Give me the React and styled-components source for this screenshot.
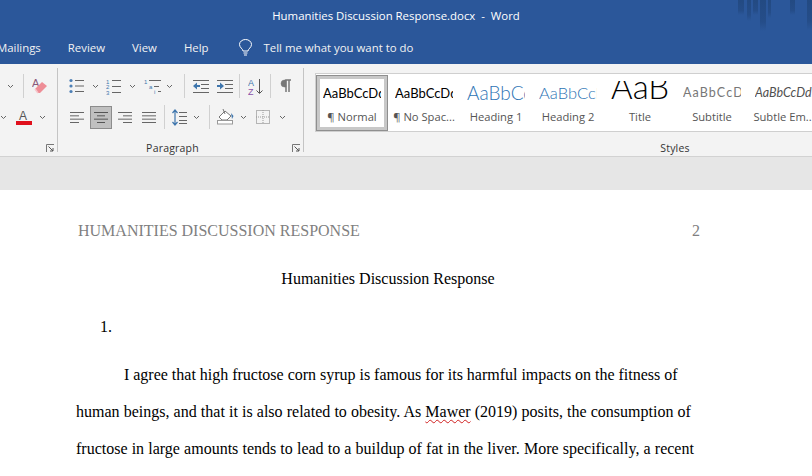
import React from "react";
import styled, { createGlobalStyle } from "styled-components";

const Global = createGlobalStyle`
  html, body { margin: 0; padding: 0; height: 100%; overflow: hidden; background: #e6e6e6; }
  #root { width: 812px; height: 476px; overflow: hidden; }
`;

const Window = styled.div`
  width: 812px; height: 476px; display: flex; flex-direction: column; overflow: hidden;
  font-family: "Open Sans", "Noto Sans", sans-serif;
`;
const TitleBar = styled.header`
  position: relative; height: 32px; flex: none; background: #2b579a; color: #fff; box-sizing: border-box;
  display: flex; align-items: center; justify-content: center; padding: 0 20px 2px 0;
  font-size: 11.4px; white-space: pre;
`;
const Watermark = styled.svg`
  position: absolute; right: 0; top: 0;
`;
const TabBar = styled.nav`
  height: 32px; flex: none; background: #2b579a; color: #f2f2f2;
  display: flex; align-items: center; gap: 27px; padding-bottom: 1px; box-sizing: border-box;
  font-size: 11.4px; white-space: nowrap;
`;
const Tab = styled.span`
  &:first-child { margin-left: -3px; }
`;
const TellMe = styled.span`
  display: flex; align-items: center; gap: 12px; margin-left: 3px;
`;
const Ribbon = styled.section`
  height: 93px; flex: none; box-sizing: border-box; background: #f3f3f3;
  border-bottom: 1px solid #d2d2d2; padding: 4px 0; display: flex; overflow: hidden;
`;
const Group = styled.div`
  flex: none; width: ${p => p.$w}px; box-sizing: border-box; padding-top: 3px;
  border-right: ${p => (p.$last ? "none" : "1px solid #c4c4c4")};
  display: flex; flex-direction: column;
`;
const Row = styled.div`
  height: 30px; margin-bottom: 1px; display: flex; align-items: center; flex: none;
`;
const Cell = styled.span`
  flex: none; width: ${p => p.$w}px; height: ${p => p.$h || 24}px; display: flex;
  align-items: center; justify-content: center;
`;
const ActiveCell = styled(Cell)`
  background: #c0c0c0; border: 1px solid #8c8c8c; box-sizing: border-box;
`;
const Divider = styled.span`
  flex: none; width: 1px; height: 24px; background: #d0d0d0;
`;
const Footer = styled.div`
  margin-top: auto; height: 8px; display: flex; align-items: center; font-size: 10.5px; color: #333;
  letter-spacing: .2px;
`;
const GroupLabel = styled.span`
  flex: 1; text-align: center;
`;
const Launcher = styled.svg`
  flex: none; width: 8px; height: 8px; margin: 0 3px 0 5px;
`;
const Gallery = styled.div`
  margin: 2px 0 0 11px; width: 520px; height: 59px; box-sizing: border-box; background: #fff;
  border: 1px solid #cfcfcf; border-right: none; display: flex; padding: 1px 0 0;
`;
const StyleItem = styled.div`
  flex: none; width: 72px; height: 56px; box-sizing: border-box;
  border: 1px solid ${p => (p.$sel ? "#8f8f8f" : "transparent")};
  box-shadow: ${p => (p.$sel ? "inset 0 0 0 3px #c8c8c8" : "none")};
  display: flex; flex-direction: column; align-items: center; overflow: hidden;
`;
const Preview = styled.div`
  width: 58px; height: 31px; box-sizing: border-box; margin-top: 1px; overflow: hidden; white-space: nowrap; display: flex;
  align-items: center; font-family: Lato, "Noto Sans", sans-serif; flex: none;
  font-size: ${p => p.$size}px; color: ${p => p.$color || "#000"};
  font-weight: ${p => p.$weight || 400}; font-style: ${p => p.$italic ? "italic" : "normal"};
  letter-spacing: ${p => p.$track || 0}px;
  padding-bottom: ${p => p.$lift || 0}px;
  clip-path: inset(${p => p.$cut || 0}px 0 0 0);
`;
const ItemLabel = styled.div`
  margin-top: 1px; font-size: 11.2px; line-height: 16px; color: #555; white-space: nowrap;
`;
const Canvas = styled.main`
  flex: 1; min-height: 0; background: #e6e6e6; padding-top: 33px; overflow: hidden;
`;
const Page = styled.article`
  background: #fff; height: 400px; box-sizing: border-box; padding: 31px 112px 0 76px;
  font-family: "Liberation Serif", "Times New Roman", serif; font-size: 16px; color: #000;
`;
const DocHeader = styled.div`
  display: flex; justify-content: space-between; color: #7f7f7f; padding-left: 2px; line-height: 20px;
  font-size: 16px;
`;
const DocTitle = styled.h1`
  margin: 28px 0 0; font: inherit; text-align: center; line-height: 20px; width: 624px;
`;
const ListNumber = styled.div`
  margin-top: 28px; padding-left: 24px; line-height: 20px;
`;
const Body = styled.p`
  margin: 19px 0 0; line-height: 37px; text-indent: 48px; width: 624px;
`;
const BodyLine = styled.span`
  word-spacing: ${p => p.$ws}px;
`;
const Misspelled = styled.span`
  text-decoration: underline wavy #d02020 1px; text-underline-offset: 2px;
`;

const G = "#666";
const Lines = ({ ys, x1 = 0, x2 = 14, c = G, sw = 1 }) => ys.map((y, i) => (
  <line key={i} x1={Array.isArray(x1) ? x1[i] : x1} x2={Array.isArray(x2) ? x2[i] : x2} y1={y + .5} y2={y + .5} stroke={c} strokeWidth={sw} />
));
const B = "#4d7fb5";
const Chevron = () => (
  <svg width="7" height="5" viewBox="0 0 7 5"><path d="M1 1l2.5 2.5L6 1" fill="none" stroke="#666" strokeWidth="1" /></svg>
);
const Eraser = () => (
  <svg width="16" height="18" viewBox="0 0 16 18">
    <text x="0" y="10" fontSize="11" fontFamily="Liberation Sans" fill="#8a5a7a">A</text>
    <path d="M3 12l7-7 5 4-7 7h-2z" fill="#ee8d96" />
    <path d="M3 12l3 4" stroke="#f7c6cb" strokeWidth="1.5" />
  </svg>
);
const FontColor = () => (
  <svg width="16" height="16" viewBox="0 0 16 16">
    <text x="3" y="11" fontSize="12" fontFamily="Liberation Sans" fill="#555">A</text>
    <rect y="12" width="16" height="4" fill="#e0101c" />
  </svg>
);
const Bullets = () => (
  <svg width="15" height="16" viewBox="0 0 15 16">
    <circle cx="2" cy="2.5" r="1.6" fill={B} /><circle cx="2" cy="8" r="1.6" fill={B} /><circle cx="2" cy="13.5" r="1.6" fill={B} />
    <Lines ys={[2, 7.5, 13]} x1={6} x2={15} />
  </svg>
);
const Numbers = () => (
  <svg width="15" height="17" viewBox="0 0 15 17">
    {["1", "2", "3"].map((n, i) => <text key={n} x="0" y={5.5 + i * 5.6} fontSize="6" fontFamily="Liberation Sans" fill="#3f76ad">{n}</text>)}
    <Lines ys={[2, 8, 14]} x1={6} x2={15} />
  </svg>
);
const MultiLevel = () => (
  <svg width="18" height="17" viewBox="0 0 18 17">
    <text x="0" y="6" fontSize="6" fontFamily="Liberation Sans" fill="#3f76ad">1</text>
    <text x="5" y="11" fontSize="6" fontFamily="Liberation Sans" fill="#3f76ad">a</text>
    <text x="10" y="16" fontSize="6" fontFamily="Liberation Sans" fill="#3f76ad">i</text>
    <Lines ys={[2, 8, 13]} x1={[5, 10, 14]} x2={[17, 15, 17]} />
  </svg>
);
const Outdent = () => (
  <svg width="16" height="13" viewBox="0 0 16 13">
    <Lines ys={[0, 12]} x2={16} />
    <Lines ys={[4, 8]} x1={8} x2={16} />
    <path d="M0 6l4-3.5V5h3v2H4v2.500z" fill="#3f76ad" />
  </svg>
);
const Indent = () => (
  <svg width="16" height="13" viewBox="0 0 16 13">
    <Lines ys={[0, 12]} x2={16} />
    <Lines ys={[4, 8]} x1={8} x2={16} />
    <path d="M7 6L3 2.500V5H0v2h3v2.500z" fill="#3f76ad" />
  </svg>
);
const Sort = () => (
  <svg width="15" height="17" viewBox="0 0 15 17">
    <text x="0" y="8" fontSize="9" fontFamily="Liberation Sans" fill="#3f76ad">A</text>
    <text x="0" y="16.500" fontSize="9" fontFamily="Liberation Sans" fill="#8a50a8">Z</text>
    <path d="M11.500 1v14M8.500 12.500l3 3 3-3" fill="none" stroke="#555" strokeWidth="1" />
  </svg>
);
const Pilcrow = () => (
  <svg width="12" height="14" viewBox="0 0 12 14">
    <path d="M6 13V1h5M9 1v12" stroke="#777" strokeWidth="1.500" fill="none" />
    <path d="M6 1H4.500a3.500 3.500 0 0 0 0 7H6z" fill="#777" stroke="#777" strokeWidth=".5" />
  </svg>
);
const Align = ({ kind, dark }) => {
  const xs = {
    left: [[0, 14], [0, 9], [0, 14], [0, 9]],
    center: [[0, 14], [3, 11], [0, 14], [3, 11]],
    right: [[0, 14], [5, 14], [0, 14], [5, 14]],
    just: [[0, 14], [0, 14], [0, 14], [0, 14]],
  }[kind];
  return (
    <svg width="14" height="11" viewBox="0 0 14 11">
      <Lines ys={[0, 3.330, 6.670, 10]} x1={xs.map(v => v[0])} x2={xs.map(v => v[1])} c={dark ? "#555" : G} />
    </svg>
  );
};
const LineSpacing = () => (
  <svg width="15" height="17" viewBox="0 0 15 17">
    <path d="M3 1v15M.5 4L3 1l2.500 3M.5 13L3 16l2.500-3" fill="none" stroke="#3f76ad" strokeWidth="1.200" />
    <Lines ys={[3, 7, 11, 14]} x1={7} x2={15} />
  </svg>
);
const Shading = () => (
  <svg width="17" height="16" viewBox="0 0 17 16">
    <path d="M2 8l6-6 6 5-4 4H5z" fill="#fff" stroke="#777" />
    <path d="M6 0l2 5" stroke="#777" />
    <path d="M14 4l2.500 3-1.500 3z" fill="#3f76ad" />
    <rect x=".5" y="11.500" width="15" height="3.500" fill="#fff" stroke="#999" />
  </svg>
);
const Borders = () => (
  <svg width="14" height="14" viewBox="0 0 14 14">
    <rect x=".5" y=".5" width="13" height="13" fill="none" stroke="#777" strokeDasharray="1 1" />
    <path d="M7 0v14M0 7h14" stroke="#999" strokeDasharray="1 1" />
  </svg>
);
const Bulb = () => (
  <svg width="13" height="17" viewBox="0 0 13 17" fill="none" stroke="#fff" strokeWidth="1">
    <path d="M4 12c0-2-3.500-3.500-3.500-6.500a6 5 0 0 1 12 0C12.500 8.500 9 10 9 12z" />
    <path d="M4.500 14h4M5 16h3" />
  </svg>
);
const LauncherIcon = () => (
  <Launcher viewBox="0 0 8 8">
    <path d="M.5 8V.5H8" fill="none" stroke="#777" />
    <path d="M2.500 2.500L7 7M7 4v3H4" fill="none" stroke="#555" />
  </Launcher>
);

const styleItems = [
  { name: "¶ Normal", sel: true, size: 13 },
  { name: "¶ No Spac...", size: 13 },
  { name: "Heading 1", size: 19, color: "#2e74b5", weight: 300 },
  { name: "Heading 2", size: 16.500, color: "#2e74b5", weight: 300 },
  { name: "Title", size: 33, weight: 300, text: "AaB", lift: 14, cut: 4 },
  { name: "Subtitle", size: 12.500, color: "#777", track: 1.100 },
  { name: "Subtle Em...", size: 12.500, color: "#505050", italic: true },
];

const bars = [[0, 6, 15], [9, 4, 21], [15, 5, 15], [22, 6, 31], [30, 3, 18], [52, 5, 15], [69, 5, 30]];

export default function App() {
  return (
    <Window>
      <Global />
      <TitleBar>
        Humanities Discussion Response.docx  -  Word
        <Watermark width="74" height="32" viewBox="0 0 74 32">
          <defs>
            <linearGradient id="bar" x1="0" y1="0" x2="0" y2="1">
              <stop offset="0" stopColor="#234a82" />
              <stop offset=".7" stopColor="#254d89" />
              <stop offset="1" stopColor="#2b579a" />
            </linearGradient>
          </defs>
          {bars.map(([x, w, h]) => <rect key={x} x={x} y="0" width={w} height={h} fill="url(#bar)" />)}
        </Watermark>
      </TitleBar>
      <TabBar>
        <Tab>Mailings</Tab>
        <Tab>Review</Tab>
        <Tab>View</Tab>
        <Tab>Help</Tab>
        <TellMe><Bulb />Tell me what you want to do</TellMe>
      </TabBar>
      <Ribbon>
        <Group $w={58}>
          <Row>
            <Cell $w={5} />
            <Cell $w={11}><Chevron /></Cell>
            <Cell $w={7} />
            <Divider />
            <Cell $w={7} />
            <Cell $w={18}><Eraser /></Cell>
          </Row>
          <Row>
            <Cell $w={7}><Chevron /></Cell>
            <Cell $w={9} />
            <Cell $w={16}><FontColor /></Cell>
            <Cell $w={5} />
            <Cell $w={10}><Chevron /></Cell>
          </Row>
          <Footer>
            <GroupLabel />
            <LauncherIcon />
          </Footer>
        </Group>
        <Group $w={246}>
          <Row>
            <Cell $w={11} />
            <Cell $w={15}><Bullets /></Cell>
            <Cell $w={22}><Chevron /></Cell>
            <Cell $w={15}><Numbers /></Cell>
            <Cell $w={22}><Chevron /></Cell>
            <Cell $w={19}><MultiLevel /></Cell>
            <Cell $w={14}><Chevron /></Cell>
            <Cell $w={8} />
            <Divider />
            <Cell $w={7} />
            <Cell $w={17}><Outdent /></Cell>
            <Cell $w={7} />
            <Cell $w={17}><Indent /></Cell>
            <Cell $w={6} />
            <Divider />
            <Cell $w={7} />
            <Cell $w={16}><Sort /></Cell>
            <Cell $w={7} />
            <Divider />
            <Cell $w={8} />
            <Cell $w={14}><Pilcrow /></Cell>
          </Row>
          <Row>
            <Cell $w={12} />
            <Cell $w={14}><Align kind="left" /></Cell>
            <Cell $w={6} />
            <ActiveCell $w={22} $h={23}><Align kind="center" dark /></ActiveCell>
            <Cell $w={6} />
            <Cell $w={14}><Align kind="right" /></Cell>
            <Cell $w={10} />
            <Cell $w={14}><Align kind="just" /></Cell>
            <Cell $w={8} />
            <Divider />
            <Cell $w={7} />
            <Cell $w={15}><LineSpacing /></Cell>
            <Cell $w={18}><Chevron /></Cell>
            <Cell $w={4} />
            <Divider />
            <Cell $w={7} />
            <Cell $w={17}><Shading /></Cell>
            <Cell $w={18}><Chevron /></Cell>
            <Cell $w={4} />
            <Cell $w={14}><Borders /></Cell>
            <Cell $w={24}><Chevron /></Cell>
          </Row>
          <Footer>
            <GroupLabel>Paragraph</GroupLabel>
            <LauncherIcon />
          </Footer>
        </Group>
        <Group $w={742} $last>
          <Gallery>
            {styleItems.map(s => (
              <StyleItem key={s.name} $sel={s.sel}>
                <Preview $size={s.size} $color={s.color} $weight={s.weight} $italic={s.italic} $track={s.track} $lift={s.lift} $cut={s.cut}>
                  {s.text || "AaBbCcDd"}
                </Preview>
                <ItemLabel>{s.name}</ItemLabel>
              </StyleItem>
            ))}
          </Gallery>
          <Footer><GroupLabel>Styles</GroupLabel></Footer>
        </Group>
      </Ribbon>
      <Canvas>
        <Page>
          <DocHeader><span>HUMANITIES DISCUSSION RESPONSE</span><span>2</span></DocHeader>
          <DocTitle>Humanities Discussion Response</DocTitle>
          <ListNumber>1.</ListNumber>
          <Body>
            <BodyLine $ws={-0.06}>I agree that high fructose corn syrup is famous for its harmful impacts on the fitness of </BodyLine>
            <BodyLine $ws={0.14}>human beings, and that it is also related to obesity. As <Misspelled>Mawer</Misspelled> (2019) posits, the consumption of </BodyLine>
            <BodyLine $ws={0.14}>fructose in large amounts tends to lead to a buildup of fat in the liver. More specifically, a recent</BodyLine>
          </Body>
        </Page>
      </Canvas>
    </Window>
  );
}
